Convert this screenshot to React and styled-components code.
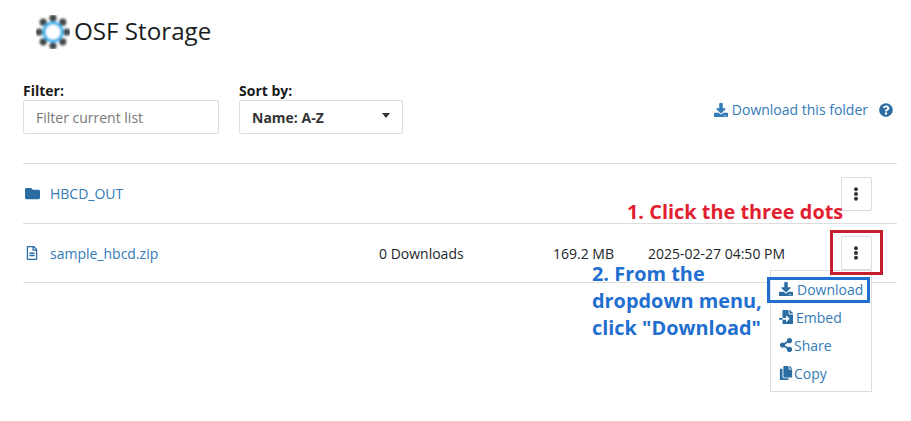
import React from "react";
import styled, { createGlobalStyle } from "styled-components";
import { FaDownload, FaFolder, FaRegFileAlt, FaQuestionCircle, FaShareAlt, FaCopy, FaFileImport, FaEllipsisV } from "react-icons/fa";

const Global = createGlobalStyle`
  html, body { margin: 0; padding: 0; background: #fff; }
  body { font-family: "Open Sans", "Liberation Sans", sans-serif; font-size: 14px; color: #212529; }
`;
const Page = styled.div`
  position: relative; width: 911px; height: 421px; overflow: hidden;
  padding: 0 14px 0 23px; box-sizing: border-box;
`;
const Title = styled.div`display: flex; align-items: center; gap: 4px; height: 64px; padding-left: 13px;`;
const Heading = styled.h1`margin: -2px 0 0; font-size: 24.2px; font-weight: 400; color: #1a1e22; line-height: 32px;`;
const Controls = styled.div`display: flex; align-items: flex-start; height: 99px; padding-top: 18px; box-sizing: border-box;`;
const Field = styled.div`display: flex; flex-direction: column; margin-right: 20px; width: ${p => p.$w}px;`;
const Label = styled.label`font-weight: 700; font-size: 14px; line-height: 18px; color: #1a1a1a;`;
const Input = styled.div`
  height: 34px; border: 1px solid #ddd; box-sizing: border-box; border-radius: 2px;
  display: flex; align-items: center; padding-left: 12px; color: #777; font-size: 14px;
`;
const Select = styled(Input)`
  justify-content: space-between; font-weight: 700; color: #333; padding: 0 12px; 
`;
const Caret = styled.span`
  width: 0; height: 0; border-left: 4px solid transparent; border-right: 4px solid transparent;
  border-top: 5px solid #333; margin-top: -4px;
`;
const FolderAction = styled.div`
  margin-left: auto; display: flex; align-items: center; gap: 11px; padding: 18px 4px 0 0; color: #337ab7; line-height: 20px;
`;
const TextLink = styled.a`display: flex; align-items: center; gap: 4px; color: #337ab7; font-size: 14px;`;
const Help = styled.span`display: flex; color: #2b6ca3; font-size: 14px;`;
const Row = styled.div`
  display: grid; grid-template-columns: 356px 174px 95px 1fr 31px; align-items: center; box-sizing: border-box;
  height: ${p => p.$h}px; border-top: 1px solid #ddd; padding-right: 25px; font-size: 14px; color: #212529;
  ${p => p.$last && "border-bottom: 1px solid #ddd;"}
`;
const Name = styled.a`display: flex; align-items: center; color: #337ab7;`;
const IconSlot = styled.span`display: flex; width: 27px; padding-left: 2px; box-sizing: border-box; color: #2b6ca3; font-size: ${p => p.$s}px;`;
const DotsButton = styled.button`
  width: 31px; height: 34px; padding: 0 1px 0 0; background: #fff; border: 1px solid #ddd; border-radius: 2px;
  display: flex; align-items: center; justify-content: center; color: #333; font-size: 14px; grid-column: 5;
`;
const Note = styled.div`
  position: absolute; left: ${p => p.$x}px; top: ${p => p.$y}px; color: ${p => p.$c};
  font-weight: 700; font-size: 19.9px; line-height: 27px; white-space: pre;
`;
const RedBox = styled.div`
  position: absolute; left: 830px; top: 230px; width: 53px; height: 45px; box-sizing: border-box; border: 3px solid #c41e2f;
`;
const Menu = styled.div`
  position: absolute; left: 770px; top: 270px; width: 102px; height: 122px; box-sizing: border-box;
  background: #fff; border: 1px solid #ddd; padding-top: 4px;
`;
const MenuItem = styled.div`
  display: flex; align-items: center; gap: ${p => p.$g}px; height: 28px; padding-left: 8px; color: #337ab7; font-size: 14px;
`;
const MenuIcon = styled.span`display: flex; font-size: 14px; color: #2b6ca3;`;
const BlueBox = styled.div`
  position: absolute; left: 767px; top: 277px; width: 103px; height: 26px; box-sizing: border-box; border: 3px solid #1f6fd0;
`;

const Logo = () => {
  const pts = [0, 45, 90, 135, 180, 225, 270, 315].map(a => [16 + 13 * Math.cos(a * Math.PI / 180), 16 + 13 * Math.sin(a * Math.PI / 180)]);
  return (
    <svg width="34" height="34" viewBox="0 0 32 32">
      <defs><filter id="soft" x="-20%" y="-20%" width="140%" height="140%"><feGaussianBlur stdDeviation="1" /></filter></defs>
      <g filter="url(#soft)">
        {pts.map(([x, y], i) => <circle key={i} cx={x} cy={y} r="3.4" fill="#44484c" />)}
        <circle cx="16" cy="16" r="10" fill="#3db4ee" />
        <circle cx="16" cy="16" r="7" fill="#ffffff" />
      </g>
    </svg>
  );
};

export default function App() {
  return (
    <>
      <Global />
      <Page>
        <Title><Logo /><Heading>OSF Storage</Heading></Title>
        <Controls>
          <Field $w={196}>
            <Label>Filter:</Label>
            <Input>Filter current list</Input>
          </Field>
          <Field $w={164}>
            <Label>Sort by:</Label>
            <Select>Name: A-Z<Caret /></Select>
          </Field>
          <FolderAction>
            <TextLink><FaDownload size={14} />Download this folder</TextLink>
            <Help><FaQuestionCircle /></Help>
          </FolderAction>
        </Controls>
        <Row $h={60}>
          <Name><IconSlot $s={15}><FaFolder /></IconSlot>HBCD_OUT</Name>
          <DotsButton><FaEllipsisV /></DotsButton>
        </Row>
        <Row $h={60} $last>
          <Name><IconSlot $s={14}><FaRegFileAlt /></IconSlot>sample_hbcd.zip</Name>
          <span>0 Downloads</span>
          <span>169.2 MB</span>
          <span>2025-02-27 04:50 PM</span>
          <DotsButton><FaEllipsisV /></DotsButton>
        </Row>
        <Note $x={627} $y={198} $c="#e3202f">1. Click the three dots</Note>
        <Note $x={592} $y={260} $c="#1f6fd0">{"2. From the\ndropdown menu,\nclick \"Download\""}</Note>
        <Menu>
          <MenuItem $g={4}><MenuIcon><FaDownload /></MenuIcon>Download</MenuItem>
          <MenuItem $g={3}><MenuIcon><FaFileImport /></MenuIcon>Embed</MenuItem>
          <MenuItem $g={1}><MenuIcon><FaShareAlt /></MenuIcon>Share</MenuItem>
          <MenuItem $g={1}><MenuIcon><FaCopy /></MenuIcon>Copy</MenuItem>
        </Menu>
        <RedBox />
        <BlueBox />
      </Page>
    </>
  );
}
